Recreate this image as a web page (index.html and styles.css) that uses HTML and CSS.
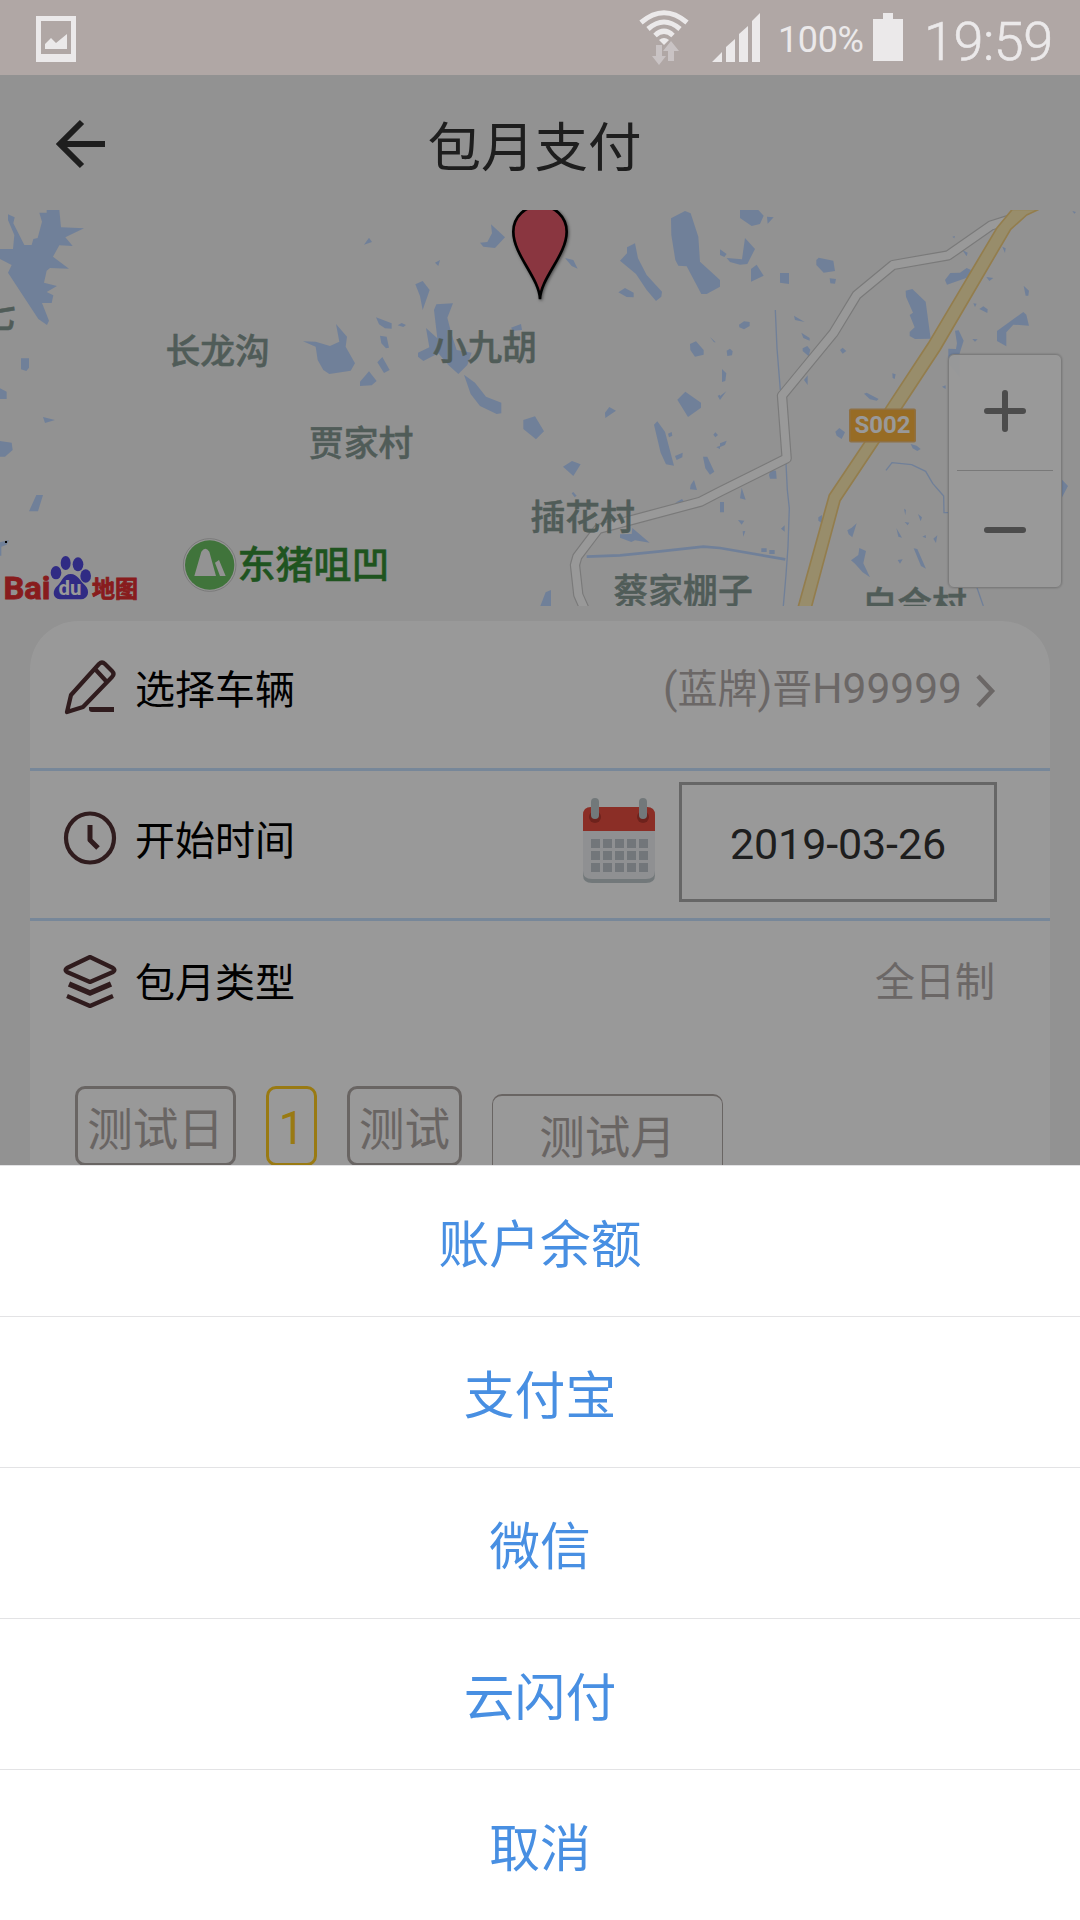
FILE: index.html
```html
<!DOCTYPE html>
<html lang="zh-CN">
<head>
<meta charset="utf-8">
<title>包月支付</title>
<link rel="stylesheet" href="styles.css">
</head>
<body>
<div class="screen">
  <header class="status">
    <svg class="status-photo" width="40" height="46" viewBox="0 0 40 46"><path fill-rule="evenodd" d="M0 0H40V46H0ZM5 5V38H35V5Z"/><path d="M9 33V28L15 22L20 27L31 18V33Z"/></svg>
    <div class="status-right">
      <svg class="status-wifi" width="50" height="56" viewBox="0 0 50 56">
        <g fill="none" stroke="#ebe9ea" stroke-width="5"><path d="M2 12.500Q25-7 48 12.500"/><path d="M9 19Q25 5 41 19"/><path d="M16 25.500Q25 17 34 25.500"/></g>
        <path d="M20 30Q25 26 30 30L25 35Z"/><path class="faint" d="M17 35h6v11h4l-7 9l-7-9h4ZM32 31l8 10h-5v10h-6v-10h-5Z"/>
      </svg>
      <svg class="status-signal" width="48" height="50" viewBox="0 0 48 50"><path d="M0 49L10 39V49ZM14 49V34L23 26V49ZM27 49V21L36 13V49ZM40 49V8L48 0V49Z"/></svg>
      <span class="status-percent">100%</span>
      <svg class="status-battery" width="30" height="48" viewBox="0 0 30 48"><path d="M0 6H10V0H20V6H30V48H0Z"/></svg>
      <span class="status-time">19:59</span>
    </div>
  </header>

  <main class="page">
    <div class="title-bar">
      <svg class="back" width="50" height="50" viewBox="0 0 50 50"><path d="M49 25H5M26 3L4 25L26 47" fill="none" stroke="#333" stroke-width="6"/></svg>
      <h1>包月支付</h1>
    </div>

    <section class="map">
      <svg class="map-canvas" width="1080" height="396" viewBox="0 210 1080 396">
        <g transform="translate(0 200) scale(.33333)">
          <g class="water">
            <path d="M118 38H140V30H178L183 82L252 85L196 112L218 138L178 136L159 170L207 206L150 204L140 212L132 248L171 258L140 276L160 286L155 309H126L147 362L141 375L115 357L24 218L35 195L0 177V147H39L43 105L24 60V43L44 52L40 70L73 135H95L100 117L113 114L126 65Z"/>
            <path d="M63 475H87V503L79 513L63 508ZM0 565L20 575V597H0ZM129 651L165 660L135 669ZM0 723L35 728L38 750L15 770H0ZM109 885H129L114 934H87ZM0 1027L27 1020L20 1034L4 1040V1067H0ZM909 424L947 425L990 438L1018 425L1008 372L1041 410L1037 440L1065 490L1052 512L988 522L970 510L953 480L947 440Z"/>
          </g>
          <g class="water" transform="translate(1080)">
            <path d="M12 134L27 113L36 126ZM225 188L240 180L235 198ZM360 128L382 126L396 100L393 73L435 112L405 144L370 140ZM615 174L640 180L653 206L635 198ZM166 253L188 243L209 270L188 330L180 288ZM48 352L95 370V386L75 385L57 373ZM113 376L125 369L138 375L130 381ZM60 407L80 410L87 443L78 445L64 430ZM52 487L67 471L89 510L72 519ZM0 545L27 514L50 543L35 556L0 558ZM222 330L229 313L279 310L262 353L274 400L290 450L335 458L322 495L295 522L265 495L235 460L190 483L174 470V458L208 442L198 384L232 415ZM312 524L345 548L378 590L424 608V640L410 642L360 618L332 582ZM453 383L483 372L486 390L460 392ZM490 660L525 649L552 694L528 718L490 687ZM609 800L636 783L662 793L640 828ZM735 638L748 621L768 632L736 654ZM780 182L801 160V142L825 130L834 175L860 225L906 275L904 290L888 303L860 270L828 222ZM775 277L795 264L821 278V292L800 291ZM933 55L975 33L992 40L1015 110L1020 185L1080 240V260L1040 282H1024L980 199L955 197L946 180L934 105ZM990 432L1008 424L1031 450V464L1005 470L991 450ZM1050 411L1067 427L1062 427ZM952 599L976 575L1023 608V623L984 651ZM882 674L892 664L915 695L942 797L918 793L902 758ZM924 701L935 696L937 707L927 712ZM945 768L968 758L967 772L950 780ZM1029 770L1042 770L1063 815L1050 824L1036 805ZM992 855L1002 840L1011 870L990 868ZM635 880L640 876L650 887L644 892ZM946 908L966 897L975 908ZM780 1003L815 1002L817 984L869 1028L825 1021L814 1026L780 1013ZM541 1218L557 1177L573 1170V1218ZM1060 704L1066 697L1074 705L1066 712ZM1069 742L1080 737V747ZM1073 587L1080 584V600Z"/>
          </g>
          <g class="water" transform="translate(2160)">
            <path d="M60 30H115L131 47L120 72L95 78L60 54ZM141 50L161 52L143 71ZM0 148L20 162L13 171L0 165ZM20 174L66 178L75 114L105 147L82 192L60 194L30 186ZM93 207L110 194L131 227L93 245ZM180 219H207V252L180 248ZM289 180L296 173L340 182L345 213L311 218L289 195ZM329 235L348 237L345 251L331 250ZM57 374L72 364L89 366V378L72 388L58 382ZM20 452L30 446L38 454L36 466L22 468ZM6 507L19 520L16 543L6 546ZM0 588L19 574L0 600ZM0 730L20 722L15 735L0 741ZM222 347L254 366L225 360ZM244 398L269 414V422L250 414ZM248 445L262 438L271 449L266 469L248 453ZM360 450L368 443L379 453L368 461ZM252 540L263 526V555ZM517 520L527 523L524 537L518 534ZM432 581L440 578L476 597L470 602L450 598ZM346 695L358 684L375 697L365 717L350 707ZM572 732L590 737L602 747L592 753L578 745ZM147 825L152 810L168 812L170 836L150 836ZM0 906H12V937H0ZM65 863L77 899L60 895ZM54 960L73 962L65 974ZM68 994L76 993L70 1010ZM183 986L194 976V995ZM124 1045H140V1056H124ZM148 1050H164V1062H148ZM295 952L306 945V970L295 962ZM557 272L577 267L617 305L632 416L585 417L569 408V396L584 382L569 345L579 338L558 290ZM675 240L691 219L720 218L740 204L753 210L745 232L681 254ZM727 150L743 158L740 169ZM697 110L705 108L703 115ZM847 140L857 145L855 159ZM799 231L820 234L808 243ZM911 257L927 272L925 287H917ZM778 327L790 319L803 328L802 339ZM760 310L770 311L765 321ZM757 417L773 418L765 425ZM831 393L910 336L919 344L927 377L880 374L859 397V439L831 423ZM1057 33L1068 36L1063 41ZM685 490V446L708 447L711 430L705 392L716 391L731 422L719 460V530ZM666 560L677 556V567ZM1024 837L1044 858L1024 896ZM382 991L395 983L410 970L397 1012L386 1003ZM552 926L558 930L556 946ZM594 942L606 952L602 964ZM554 966L568 968L563 976ZM529 984L546 1013L535 1010ZM607 1010L617 1005L618 1014ZM640 1016L652 1006L648 1029ZM533 1080L548 1078L540 1091ZM393 1081L415 1065L418 1044L438 1053L430 1090L450 1132L428 1117L405 1091ZM581 1045L592 1047L618 1106L603 1098Z"/>
          </g>
          <g class="stream" transform="translate(2160)">
            <path stroke-width="4" d="M166 330L171 445L181 570M198 790L202 870L208 925L204 1040L198 1125L190 1218M498 811L516 788L575 794L617 814L638 850L671 888L672 938H690M770 1160L790 1218"/>
            <path stroke-width="8" d="M-400 1070L-300 1066L-180 1054L-50 1040L0 1044L196 1078"/>
          </g>
          <g transform="translate(2160)" fill="none" stroke-linejoin="round">
            <path class="lane-edge" d="M865 60L812 77L685 166L519 195L410 285L340 400L186 587L200 775L0 875L-58 905L-365 987L-428 1070L-435 1095L-425 1185L-405 1230"/>
            <path class="lane-fill" d="M875 57L812 77L685 166L519 195L410 285L340 400L186 587L200 775L0 875L-58 905L-365 987L-428 1070L-435 1095L-425 1185L-405 1230"/>
            <path class="highway" d="M877 28L830 85L625 430L500 620L432 730L328 885L232 1230H272L360 902L475 730L548 620L660 450L872 88L920 45L957 28Z"/>
          </g>
          <g transform="translate(1080)"><path class="pin" d="M540 298C539 235 460 165 460 95C460 50 497 17 540 17S620 50 620 95C620 165 541 235 540 298Z"/></g>
          <circle cx="629" cy="1095" r="79" fill="#f8f8f8" stroke="#b5b5b5" stroke-width="2"/>
          <circle cx="629" cy="1095" r="74" fill="#6cc163"/>
          <path fill="#f5f5f5" d="M583 1128L604 1055Q616 1038 628 1055L648 1128ZM645 1088L657 1080L677 1128H660Z"/>
          <rect x="15" y="1023" width="6" height="6"/>
          <g fill="#5048dd"><ellipse cx="168" cy="1118" rx="16" ry="20"/><ellipse cx="197" cy="1089" rx="15" ry="21"/><ellipse cx="234" cy="1093" rx="16" ry="21"/><ellipse cx="257" cy="1128" rx="16" ry="20"/><path d="M212 1122C233 1122 240 1143 255 1156C272 1173 264 1198 243 1198H180C157 1196 155 1172 174 1156C187 1143 190 1122 212 1122Z"/></g>
        </g>
        <g class="place">
          <text x="-19" y="328">七</text>
          <text x="165.500" y="364">长龙沟</text>
          <text x="432.500" y="360">小九胡</text>
          <text x="309" y="456">贾家村</text>
          <text x="530.500" y="529.500">插花村</text>
          <text x="613.500" y="604">蔡家棚子</text>
          <text x="862.500" y="616.500">白合村</text>
        </g>
        <text class="park" x="237.500" y="577.500">东猪咀凹</text>
        <rect x="849" y="408.500" width="67" height="34" rx="2" fill="#eebb70"/>
        <rect x="850.500" y="410" width="64" height="31" rx="1" fill="#fcb43f"/>
        <text class="road-no" x="854.500" y="433" textLength="56">S002</text>
        <text class="logo" x="3.500" y="598.500" font-size="31" textLength="47" lengthAdjust="spacingAndGlyphs">Bai</text>
        <text class="logo-du" x="58.500" y="595" font-size="21" textLength="23" lengthAdjust="spacingAndGlyphs">du</text>
        <text class="logo" x="92" y="597" font-size="23" textLength="46" lengthAdjust="spacingAndGlyphs">地图</text>
      </svg>
      <div class="zoom">
        <svg width="42" height="42" viewBox="0 0 42 42"><path d="M3 21H39M21 3V39"/></svg>
        <i class="zoom-rule"></i>
        <svg width="42" height="42" viewBox="0 0 42 42"><path d="M3 21H39"/></svg>
      </div>
    </section>

    <section class="card">
      <div class="row">
        <svg class="icon" width="54" height="56" viewBox="0 0 54 56"><g class="line"><path d="M4 52L8 35L36 4Q39 1 42 4L49 11Q52 14 49 17L20 47ZM32 9L43 21"/></g><path d="M26 47H51V52H29Q26 52 26 49Z" fill="#502f32"/></svg>
        <span class="label">选择车辆</span>
        <span class="value">(<b>蓝牌</b>)<b>晋</b>H99999</span>
        <svg class="chevron" width="20" height="34" viewBox="0 0 20 34"><path d="M2 2L16 17L2 32" fill="none" stroke="#b3acab" stroke-width="4.500"/></svg>
      </div>
      <div class="row row-date">
        <svg class="icon" width="54" height="56" viewBox="0 0 54 56"><g class="line"><ellipse cx="27" cy="28" rx="24" ry="24.500"/><path stroke-width="5" d="M27 15V30L35 38"/></g></svg>
        <span class="label">开始时间</span>
        <svg class="calendar" width="74" height="86" viewBox="0 0 74 86">
          <path fill="#bfc9cc" d="M1 34H73V77Q73 85 64 85H10Q1 85 1 77Z"/><path fill="#eff0f4" d="M1 32H73V73Q73 81 64 81H10Q1 81 1 73Z"/>
          <path fill="#e84d40" d="M1 33V17Q1 9 9 9H65Q73 9 73 17V33Z"/><circle cx="13" cy="19" r="6" fill="#b83a30"/><circle cx="61" cy="19" r="6" fill="#b83a30"/>
          <g fill="#bfc9cc"><rect x="9" y="0" width="8" height="21" rx="4"/><rect x="57" y="0" width="8" height="21" rx="4"/></g>
          <path stroke="#bfc5cb" stroke-width="9" stroke-dasharray="9 3" fill="none" d="M9 45.500H66M9 57.500H66M9 69.500H66"/>
        </svg>
        <span class="date">2019-03-26</span>
      </div>
      <div class="row row-type">
        <svg class="icon" width="54" height="56" viewBox="0 0 54 56"><g class="line"><path d="M27 4L50 15Q53 17 50 19L27 29L4 19Q1 17 4 15Z"/><path stroke-width="5.500" d="M6 31L27 40L48 31"/><path d="M4 43L27 53L50 43"/></g></svg>
        <span class="label">包月类型</span>
        <span class="value type"><b>全日制</b></span>
      </div>
      <div class="chips">
        <span class="chip day">测试日</span>
        <span class="chip on">1</span>
        <span class="chip test">测试</span>
        <span class="chip month">测试月</span>
      </div>
    </section>
    <div class="mask"></div>
  </main>

  <nav class="sheet">
    <button>账户余额</button>
    <button>支付宝</button>
    <button>微信</button>
    <button>云闪付</button>
    <button>取消</button>
  </nav>
</div>
</body>
</html>
```
FILE: styles.css
```css
* { box-sizing: border-box; }
body { margin: 0; font-family: Roboto, "Noto Sans CJK SC", sans-serif; }
svg { display: block; flex: none; }
.screen { width: 1080px; height: 1920px; display: flex; flex-direction: column; overflow: hidden; }

.status { flex: none; height: 75px; padding: 0 26px 0 36px; display: flex; justify-content: space-between; background: #b0a7a5; color: #ebe9ea; }
.status svg { fill: #ebe9ea; }
.status .faint { fill: #c9c3c4; }
.status-photo { margin-top: 16px; }
.status-right { display: flex; }
.status-wifi { margin-top: 10px; }
.status-signal { margin: 13px 0 0 23px; }
.status-percent { width: 95px; margin-left: 18px; font-size: 36px; line-height: 81px; letter-spacing: -.4px; }
.status-battery { margin-top: 13px; }
.status-time { width: 130px; margin-left: 21px; font-size: 54px; line-height: 83px; font-weight: 300; letter-spacing: -.5px; -webkit-text-stroke: .6px #ebe9ea; }

.page { position: relative; flex: none; height: 1090px; overflow: hidden; background: #f3f3f3; }
.mask { position: absolute; inset: 0; background: rgba(0, 0, 0, .4); }
.title-bar { height: 135px; padding: 0 67px 0 56px; display: grid; grid-template-columns: 50px 1fr 50px; }
.back { margin-top: 44px; }
h1 { margin: 0; text-align: center; font-size: 53.5px; line-height: 147px; font-weight: 400; color: #333; }

.map { position: relative; height: 396px; }
.map text { font-family: Roboto, "Noto Sans CJK SC", sans-serif; }
.water { fill: #bbd5ff; }
.stream { fill: none; stroke: #bbd5ff; }
.lane-edge { stroke: #cbcbcb; stroke-width: 31; }
.lane-fill { stroke: #fff; stroke-width: 24; }
.highway { fill: #fdebb2; stroke: #f5d180; stroke-width: 5; }
.pin { fill: #e65b6c; stroke: #000; stroke-width: 8; filter: drop-shadow(3px 3px 4px rgba(0, 0, 0, .5)); }
.place { font-size: 34.800px; font-weight: 500; fill: #859993; stroke: #859993; stroke-width: .5; }
.park { font-size: 38px; font-weight: 500; fill: #348c35; stroke: #348c35; stroke-width: .5; }
.road-no { font-size: 24px; font-weight: 700; fill: #fff; }
.logo { font-weight: 700; fill: #e33031; stroke: #e33031; stroke-width: .8; }
.logo-du { font-weight: 700; fill: #fff; }
.zoom { position: absolute; left: 948px; top: 144px; width: 114px; height: 234px; padding: 35px 0 36px; display: flex; flex-direction: column; align-items: center; justify-content: space-between; background: rgba(255, 255, 255, .95); border: 1px solid #cfcfcf; border-radius: 6px; box-shadow: 0 0 2px rgba(0, 0, 0, .25); }
.zoom path { fill: none; stroke: #7f7f7f; stroke-width: 6; stroke-linecap: round; }
.zoom-rule { width: 96px; height: 1px; background: #cacaca; }

.card { height: 620px; margin: 15px 30px 0; background: #fff; border-radius: 48px 48px 0 0; }
.row { height: 150px; padding: 39px 53px 0 33px; display: flex; align-items: flex-start; border-bottom: 3px solid #c6e1ff; }
.row-date { padding-top: 11px; }
.row-date .icon { margin-top: 28px; }
.row-date .label { margin-top: 30px; }
.row-type { height: 165px; padding-top: 32px; border: 0; }
.icon .line { fill: none; stroke: #502f32; stroke-width: 4.200; stroke-linejoin: round; }
.label { margin-left: 18px; padding-top: 1px; font-size: 40px; line-height: 60px; color: #000; }
.row-date .label { padding-top: 0; }
.value { margin: -1px 0 0 auto; font-size: 42.500px; line-height: 60px; color: #b3acab; }
.value b { font-size: 40px; font-weight: 400; }
.chevron { margin: 14px 1px 0 14px; }
.type { margin: -1px 2px 0 auto; }
.calendar { margin: 16px 23px 0 auto; }
.date { width: 318px; height: 120px; border: 3px solid #ababab; text-align: center; font-size: 43px; line-height: 118px; letter-spacing: -.1px; color: #333; }
.chips { display: flex; align-items: flex-start; padding-left: 45px; }
.chip { height: 80px; border: 3px solid #b0a8a6; border-radius: 10px; text-align: center; font-size: 45.500px; line-height: 83px; color: #b0a8a6; white-space: nowrap; }
.day { width: 161px; }
.on { width: 51px; margin-left: 30px; border-color: #ffcb20; color: #ffcb20; line-height: 80px; }
.test { width: 115px; margin-left: 30px; }
.month { width: 231px; height: 90px; margin: 8px 0 0 30px; border-width: 2px 1.500px; line-height: 85px; }

.sheet { flex: none; background: #fff; }
.sheet button { display: block; width: 100%; height: 151px; margin: 0; padding: 0; border: 0; border-top: 1px solid #e3e3e5; background: #fff; color: #488fe2; font: 400 50.800px/150px "Noto Sans CJK SC", sans-serif; }
```
